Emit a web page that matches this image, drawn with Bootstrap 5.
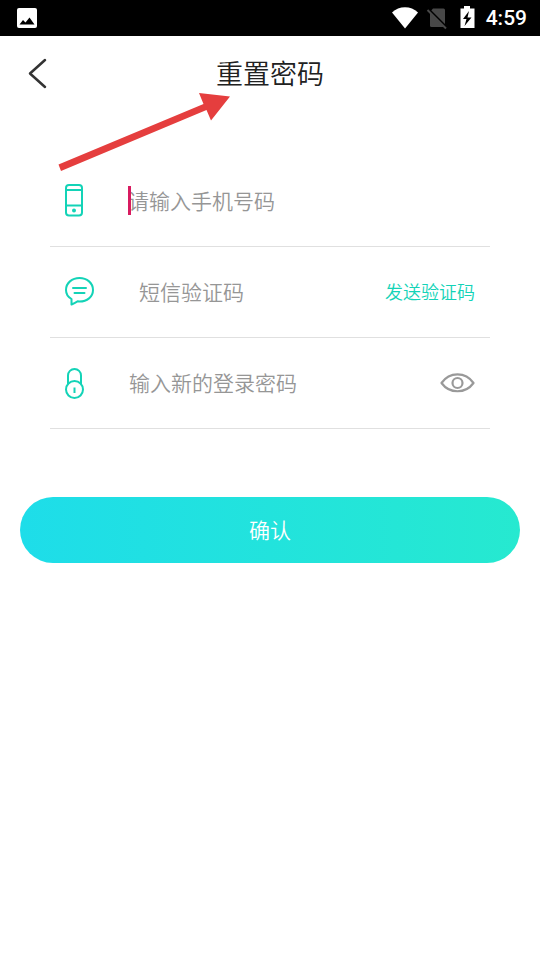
<!DOCTYPE html>
<html lang="zh-CN">
<head>
<meta charset="utf-8">
<meta name="viewport" content="width=device-width, initial-scale=1">
<title>重置密码</title>
<link href="https://cdn.jsdelivr.net/npm/bootstrap@5.3.0/dist/css/bootstrap.min.css" rel="stylesheet">
<style>
  body { font-family: "Noto Sans CJK SC", sans-serif; background: #fff; color: #212121; }
  svg { display: block; flex: none; }
  .status-bar { height: 36px; background: #000; color: #fff; padding: 0 13px 0 17px; }
  .clock { font: 500 21px/36px Roboto, sans-serif; margin-left: 11px; }
  .title-bar { height: 75px; }
  .title-bar h1 { font-size: 27px; line-height: 40px; font-weight: 350; padding-bottom: 2px; }
  .back-btn { left: 20px; top: 16px; width: 44px; height: 44px; }
  .reset-form { padding-top: 45px; }
  .field-list { margin: 0 50px; }
  .field-row { height: 91px; padding: 0 15px; border-bottom: 1px solid #e0e0e0; color: #13d3b7; }
  .field-box { margin-left: 45px; padding-bottom: 2px; }
  .field-box input { font-size: 21px; line-height: 32px; height: 32px; font-weight: 350; color: #212121; }
  .field-box input:focus { box-shadow: none; }
  .field-box input::placeholder { color: #969696; opacity: 1; }
  .caret { left: 0; top: 2px; width: 3px; height: 29px; background: #d81b60; }
  .send-btn { font-size: 18px; line-height: 27px; font-weight: 350; padding: 0 0 2px; color: #13d3b7; }
  .confirm-wrap { padding: 68px 20px 0; }
  .confirm-btn { height: 66px; font-size: 21px; font-weight: 350; color: #fff; background: linear-gradient(90deg, #1edde9, #26e9d0); }
  .pointer-arrow { left: 50px; top: 84px; z-index: 2; pointer-events: none; }
</style>
<script src="https://cdn.jsdelivr.net/npm/bootstrap@5.3.0/dist/js/bootstrap.bundle.min.js"></script>
</head>
<body class="position-relative">

<div class="status-bar d-flex align-items-center">
  <svg class="me-auto" width="20" height="20" viewBox="0 0 20 20"><rect width="20" height="20" rx="2" fill="#fff"/><path d="M2.500 16.500 6 12l2.500 2.500 4-5 5 7z" fill="#000"/></svg>
  <svg width="84" height="24" viewBox="0 0 84 24">
    <path d="M1 6.500C8-.500 20-.500 27 6.500L14 22.500z" fill="#fff"/>
    <path d="M42 2.500h10.500Q54 2.500 54 4V19.500Q54 21 52.500 21H40.500Q39 21 39 19.500V6z" fill="#484848"/>
    <path d="M38 3.500 56 21.500" stroke="#000" stroke-width="2"/>
    <path d="M36.500 4 55 22.500" stroke="#484848" stroke-width="2"/>
    <path d="M69.500 2.500h3.500V0h6v2.500H83.500V22H69.500z" fill="#fff"/>
    <path d="M78 5 72 13h3.500l-2 7 7-8.500h-4z" fill="#000"/>
  </svg>
  <span class="clock">4:59</span>
</div>

<header class="title-bar position-relative d-flex align-items-center justify-content-center">
  <button type="button" class="back-btn btn p-0 border-0 position-absolute" aria-label="返回">
    <svg width="44" height="44" viewBox="0 0 44 44" fill="none" stroke="#333" stroke-width="2.500" stroke-linecap="round" stroke-linejoin="round"><path d="M25 8 10 21.500 25 35"/></svg>
  </button>
  <h1 class="mb-0">重置密码</h1>
</header>

<form class="reset-form">
  <div class="field-list">
    <div class="field-row d-flex align-items-center">
      <label for="phone" aria-label="手机号码">
        <svg width="18" height="34" viewBox="0 0 18 34" fill="none" stroke="currentColor" stroke-width="2"><rect x="1" y="1" width="16" height="30.500" rx="3"/><path d="M1 6h16M1 21.500h16"/><circle cx="9" cy="26.500" r="2" fill="currentColor" stroke="none"/></svg>
      </label>
      <div class="field-box position-relative flex-grow-1">
        <input id="phone" type="tel" class="form-control p-0 border-0 bg-transparent" placeholder="请输入手机号码">
        <span class="caret position-absolute"></span>
      </div>
    </div>
    <div class="field-row d-flex align-items-center">
      <label for="code" aria-label="短信验证码">
        <svg width="29" height="30" viewBox="0 0 29 30" fill="none" stroke="currentColor" stroke-width="2" stroke-linejoin="round"><path d="M6.500 27.500V22C3 20 1 16.500 1 13 1 6 7 1 14.500 1S28 6 28 13 22 24.500 14.500 24.500L12.500 24.300Q9.500 26 6.500 27.500z"/><path d="M8 11h13M9.500 16h10" stroke-linecap="round"/></svg>
      </label>
      <div class="field-box flex-grow-1">
        <input id="code" type="text" class="form-control p-0 border-0 bg-transparent" placeholder="短信验证码">
      </div>
      <button type="button" class="send-btn btn border-0 flex-shrink-0">发送验证码</button>
    </div>
    <div class="field-row d-flex align-items-center">
      <label for="password" aria-label="新的登录密码">
        <svg width="19" height="32" viewBox="0 0 19 32" fill="none" stroke="currentColor" stroke-width="2"><circle cx="9.500" cy="22.500" r="8.500"/><path d="M3 17V8.500a6.500 6.500 0 0 1 13 0V17"/><path d="M9.500 20.500v5.500"/></svg>
      </label>
      <div class="field-box flex-grow-1">
        <input id="password" type="password" class="form-control p-0 border-0 bg-transparent" placeholder="输入新的登录密码">
      </div>
      <button type="button" class="btn p-0 border-0" aria-label="显示密码">
        <svg width="35" height="20" viewBox="0 0 35 20" fill="none" stroke="#999" stroke-width="2.200" stroke-linejoin="round"><path d="M1.500 10C9.500-1.500 25.500-1.500 33.500 10 25.500 21 9.500 21 1.500 10z"/><circle cx="17.500" cy="10" r="5"/></svg>
      </button>
    </div>
  </div>
  <div class="confirm-wrap">
    <button type="submit" class="confirm-btn btn border-0 rounded-pill w-100">确认</button>
  </div>
</form>

<svg class="pointer-arrow position-absolute" width="190" height="96" viewBox="0 0 190 96" aria-hidden="true"><path d="M8.500 80.500 153.500 20 149 9 180 12.500 161 36.500 156.500 26 11 87z" fill="#e53e3e"/></svg>

</body>
</html>
